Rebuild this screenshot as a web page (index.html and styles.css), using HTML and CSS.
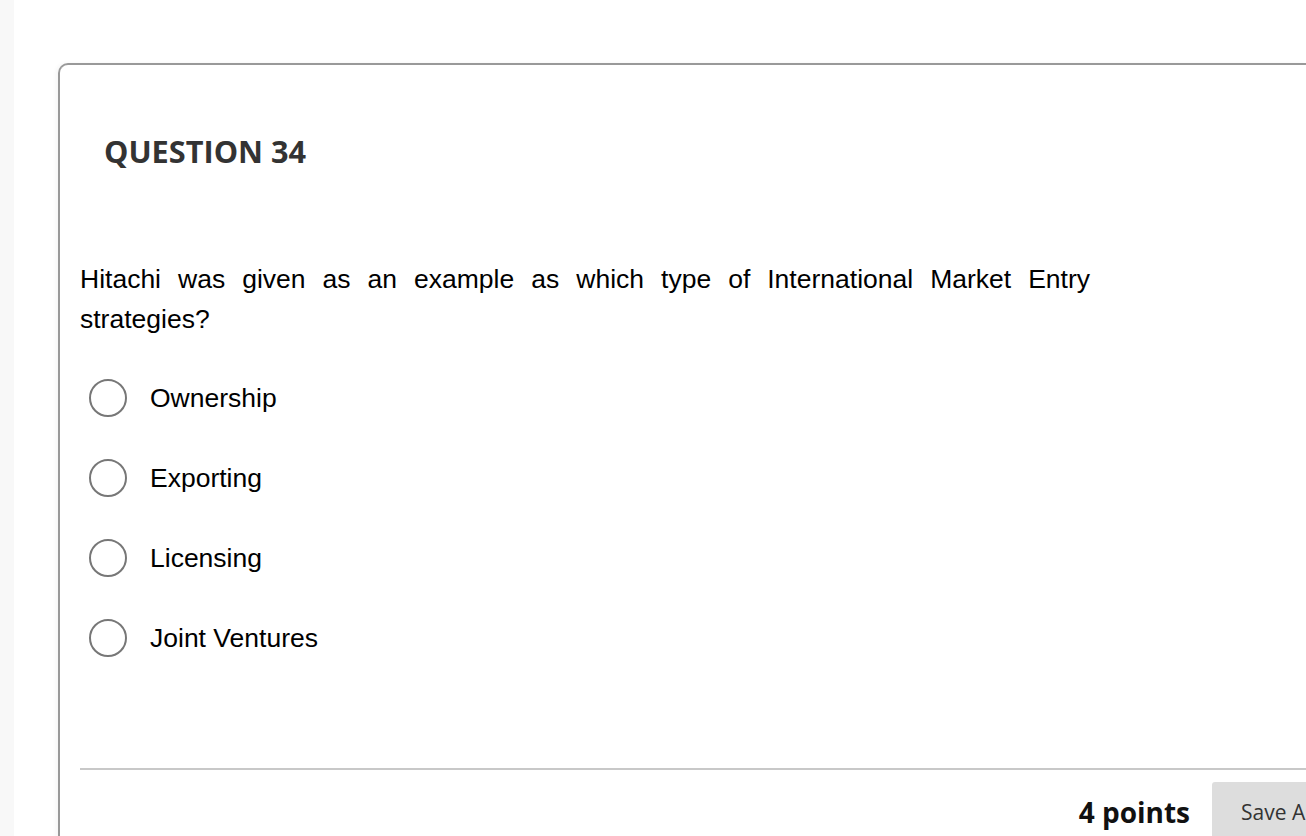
FILE: index.html
```html
<!DOCTYPE html>
<html lang="en">
<head>
<meta charset="utf-8">
<title>Question 34</title>
<link rel="stylesheet" href="styles.css">
</head>
<body>
<div class="rail"></div>
<main class="main">
  <section class="card">
    <h2 class="qtitle">QUESTION 34</h2>
    <p class="qtext">Hitachi was given as an example as which type of International Market Entry strategies?</p>
    <ul class="options">
      <li class="option"><span class="radio"></span><span class="label">Ownership</span></li>
      <li class="option"><span class="radio"></span><span class="label">Exporting</span></li>
      <li class="option"><span class="radio"></span><span class="label">Licensing</span></li>
      <li class="option"><span class="radio"></span><span class="label">Joint Ventures</span></li>
    </ul>
    <div class="sep"></div>
    <div class="footer">
      <span class="points">4 points</span>
      <button class="save">Save Answer</button>
    </div>
  </section>
</main>
</body>
</html>
```

FILE: styles.css
```css
html, body {
  margin: 0;
  padding: 0;
}
body {
  display: flex;
  height: 836px;
  overflow: hidden;
  background: #ffffff;
}
.rail {
  width: 14px;
  flex: 0 0 14px;
  background: #f8f8f8;
}
.main {
  flex: 1;
  min-width: 0;
  padding: 63px 0 0 44px;
}
.card {
  border-top: 2px solid #999999;
  border-left: 2px solid #999999;
  border-top-left-radius: 10px;
  padding: 65px 0 0 20px;
  height: 900px;
  box-shadow: -2px 0 4px rgba(0, 0, 0, 0.04);
}
.qtitle {
  margin: 0;
  padding-left: 24px;
  font-family: "Open Sans", sans-serif;
  font-weight: 700;
  font-size: 30.7px;
  line-height: 42px;
  color: #333333;
}
.qtext {
  margin: 87px 0 0 0;
  width: 1010px;
  font-family: "Liberation Sans", Arial, sans-serif;
  font-size: 26.5px;
  line-height: 40px;
  text-align: justify;
  color: #000000;
}
.options {
  list-style: none;
  margin: 39px 0 0 0;
  padding: 0;
}
.option {
  display: flex;
  align-items: center;
  height: 40px;
  margin-bottom: 40px;
}
.option:last-child {
  margin-bottom: 0;
}
.radio {
  box-sizing: border-box;
  width: 38px;
  height: 38px;
  margin-left: 9px;
  border: 2px solid #777777;
  border-radius: 50%;
  background: #ffffff;
}
.label {
  margin-left: 23px;
  font-family: "Liberation Sans", Arial, sans-serif;
  font-size: 26.5px;
  color: #000000;
}
.sep {
  margin-top: 110px;
  height: 2px;
  background: #c8c8c8;
}
.footer {
  display: flex;
  justify-content: flex-end;
  align-items: center;
  gap: 22px;
  margin-top: 12px;
  margin-right: -66px;
}
.points {
  font-family: "Open Sans", sans-serif;
  font-weight: 700;
  font-size: 28px;
  color: #111111;
}
.save {
  width: 160px;
  height: 60px;
  padding: 0 0 0 29px;
  border: none;
  border-radius: 3px 0 0 0;
  background: #dddddd;
  font-family: "Open Sans", sans-serif;
  font-size: 21px;
  color: #333333;
  text-align: left;
  white-space: nowrap;
}
```
